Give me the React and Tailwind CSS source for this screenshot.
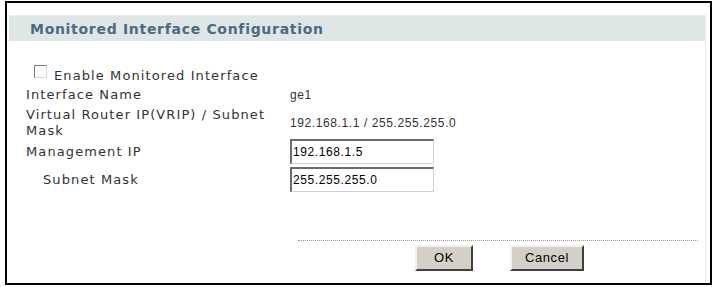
function TextBox({ value }) {
  return (
    <div className="w-[144px] h-[25px] bg-white border-t-2 border-l-2 border-b border-r border-t-[#6b6b6b] border-l-[#6b6b6b] border-b-[#d4d0c8] border-r-[#d4d0c8] flex items-center pl-[1px] text-[12px] leading-[16px] tracking-[0.6px] text-black font-['Liberation_Sans',Arial,sans-serif]">
      {value}
    </div>
  );
}

function Button({ children, width }) {
  return (
    <div
      className={`${width} h-[26px] bg-[#d4d0c8] border-2 border-t-[#f4f2ee] border-l-[#f4f2ee] border-b-[#404040] border-r-[#404040] flex items-center justify-center text-[13px] leading-[16px] tracking-[0.6px] text-black font-['Liberation_Sans',Arial,sans-serif]`}
    >
      {children}
    </div>
  );
}

export default function App() {
  const label = "text-[13px] leading-[16px] tracking-[1.1px] text-[#333333] font-['DejaVu_Sans',Verdana,sans-serif]";
  const value = "text-[12px] leading-[16px] tracking-[0.6px] text-[#333333] font-['Liberation_Sans',Arial,sans-serif]";
  return (
    <div className="w-[712px] h-[287px] bg-white pt-px pl-[5px] overflow-hidden">
      <div className="w-[707px] h-[284px] border-2 border-black flex flex-col pt-[12px] pl-[2px] pr-[4px]">
        <div className="flex-1 flex flex-col border-r border-[#ececec]">
          <div className="h-[26px] shrink-0 bg-[#dfe6e6] border-t border-[#eaeeee] flex items-center pl-[21px]">
            <span className="font-bold text-[14px] leading-none tracking-[0.7px] text-[#4b6b82] font-['DejaVu_Sans',Verdana,sans-serif]">
              Monitored Interface Configuration
            </span>
          </div>

          <div className="mt-[24px] h-[19px] flex items-start pl-[25px]">
            <span className="w-[13px] h-[13px] bg-white border border-t-[#7d7d7d] border-l-[#7d7d7d] border-b-[#dcdcdc] border-r-[#dcdcdc]" />
            <span className={`ml-[7px] mt-[3px] ${label}`}>Enable Monitored Interface</span>
          </div>

          <div className="pl-[17px] grid grid-cols-[264px_1fr]">
            <div className={`mt-[3px] ${label}`}>Interface Name</div>
            <div className={`mt-[3px] flex items-center ${value}`}>ge1</div>

            <div className={`mt-[4px] ${label}`}>Virtual Router IP(VRIP) / Subnet Mask</div>
            <div className={`mt-[4px] flex items-center ${value}`}>192.168.1.1 / 255.255.255.0</div>

            <div className={`h-[25px] flex items-center ${label}`}>Management IP</div>
            <div className="h-[25px] flex items-center">
              <TextBox value="192.168.1.5" />
            </div>

            <div className={`mt-[3px] h-[25px] flex items-center pl-[17px] ${label}`}>Subnet Mask</div>
            <div className="mt-[3px] h-[25px] flex items-center">
              <TextBox value="255.255.255.0" />
            </div>
          </div>

          <div className="mt-[48px] ml-[289px] w-[400px] border-t border-dotted border-[#9a9a9a]" />

          <div className="mt-[4px] flex pl-[406px] gap-[37px]">
            <Button width="w-[58px]">OK</Button>
            <Button width="w-[74px]">Cancel</Button>
          </div>
        </div>
      </div>
    </div>
  );
}
